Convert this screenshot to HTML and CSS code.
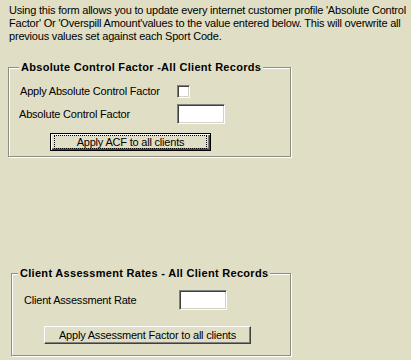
FILE: index.html
```html
<!DOCTYPE html>
<html>
<head>
    <title>Update Client Factors</title>
    <link rel="stylesheet" href="styles.css">
</head>
<body>
    <p class="intro">Using this form allows you to update every internet customer profile 'Absolute Control Factor' Or 'Overspill Amount'values to the value entered below. This will overwrite all previous values set against each Sport Code.</p>

    <fieldset class="group group-acf">
        <legend>Absolute Control Factor -All Client Records</legend>
        <div class="row row-check">
            <label class="lbl" for="applyAcf">Apply Absolute Control Factor</label>
            <input type="checkbox" id="applyAcf" class="check">
        </div>
        <div class="row row-input">
            <label class="lbl" for="acfValue">Absolute Control Factor</label>
            <input type="text" id="acfValue" class="field">
        </div>
        <button class="btn btn-default btn-acf"><span class="focus">Apply ACF to all clients</span></button>
    </fieldset>

    <fieldset class="group group-rate">
        <legend>Client Assessment Rates - All Client Records</legend>
        <div class="row row-input">
            <label class="lbl" for="rateValue">Client Assessment Rate</label>
            <input type="text" id="rateValue" class="field">
        </div>
        <button class="btn btn-rate"><span class="focus">Apply Assessment Factor to all clients</span></button>
    </fieldset>
</body>
</html>
```

FILE: styles.css
```css
body {
    margin: 0;
    padding: 4px 0 0 9px;
    width: 411px;
    height: 360px;
    box-sizing: border-box;
    overflow: hidden;
    background-color: #e0dfc5;
    font-family: "Liberation Sans", Arial, sans-serif;
    font-size: 11px;
    letter-spacing: -0.2px;
    color: #000;
}

.intro {
    margin: 0;
    width: 401px;
    line-height: 13px;
}

.group {
    box-sizing: border-box;
    min-width: 0;
    border: 1px solid #8e8e84;
    box-shadow: 1px 1px 0 #fff, inset 1px 1px 0 #fff;
    padding: 11px 0 5px 10px;
}

.group legend {
    padding: 0 2px;
    margin-left: 0;
    background-color: #e0dfc5;
    font-weight: bold;
    letter-spacing: 0.3px;
    line-height: 13px;
}

.group-acf {
    width: 283px;
    margin: 18px 0 0 -1px;
}

.group-rate {
    width: 280px;
    margin: 110px 0 0 2px;
    padding: 10px 0 11px 12px;
}

.group-rate legend {
    margin-left: -6px;
}

.row {
    display: flex;
    align-items: center;
}

.lbl {
    line-height: 13px;
}

.row-check {
    height: 13px;
}

.row-input {
    height: 20px;
    margin-top: 6px;
}

.group-acf .lbl {
    width: 158px;
}

.group-acf .row-check .lbl {
    margin-left: 1px;
    width: 157px;
}

.group-rate .row-input {
    margin-top: 0;
}

.group-rate .lbl {
    width: 155px;
}

.check {
    -webkit-appearance: none;
    appearance: none;
    margin: 0;
    width: 13px;
    height: 13px;
    box-sizing: border-box;
    background-color: #fff;
    border: 1px solid;
    border-color: #808080 #fff #fff #808080;
    box-shadow: inset 1px 1px 0 #404040, inset -1px -1px 0 #d4d0c8;
}

.field {
    margin: 0;
    padding: 0 2px;
    width: 48px;
    height: 20px;
    box-sizing: border-box;
    background-color: #fff;
    border: 1px solid;
    border-color: #808080 #fff #fff #808080;
    box-shadow: inset 1px 1px 0 #404040, inset -1px -1px 0 #d4d0c8;
    font-family: inherit;
    font-size: 11px;
    outline: none;
}

.btn {
    display: block;
    box-sizing: border-box;
    height: 18px;
    padding: 0;
    background-color: #e0dfc5;
    border: 1px solid;
    border-color: #fff #404040 #404040 #fff;
    box-shadow: inset -1px -1px 0 #808080;
    font-family: inherit;
    font-size: 11px;
    letter-spacing: -0.2px;
    line-height: 14px;
    color: #000;
    cursor: pointer;
}

.btn .focus {
    display: block;
    margin: 0 2px;
    border: 1px solid transparent;
    line-height: 12px;
}

.btn-default {
    border: 1px solid #000;
    box-shadow: inset 1px 1px 0 #fff, inset -1px -1px 0 #404040, inset -2px -2px 0 #808080;
}

.btn-default .focus {
    margin: 0 3px;
    border: 1px dotted #000;
}

.btn-acf {
    width: 161px;
    margin: 9px 0 0 31px;
}

.btn-rate {
    width: 207px;
    margin: 16px 0 0 20px;
}
```
